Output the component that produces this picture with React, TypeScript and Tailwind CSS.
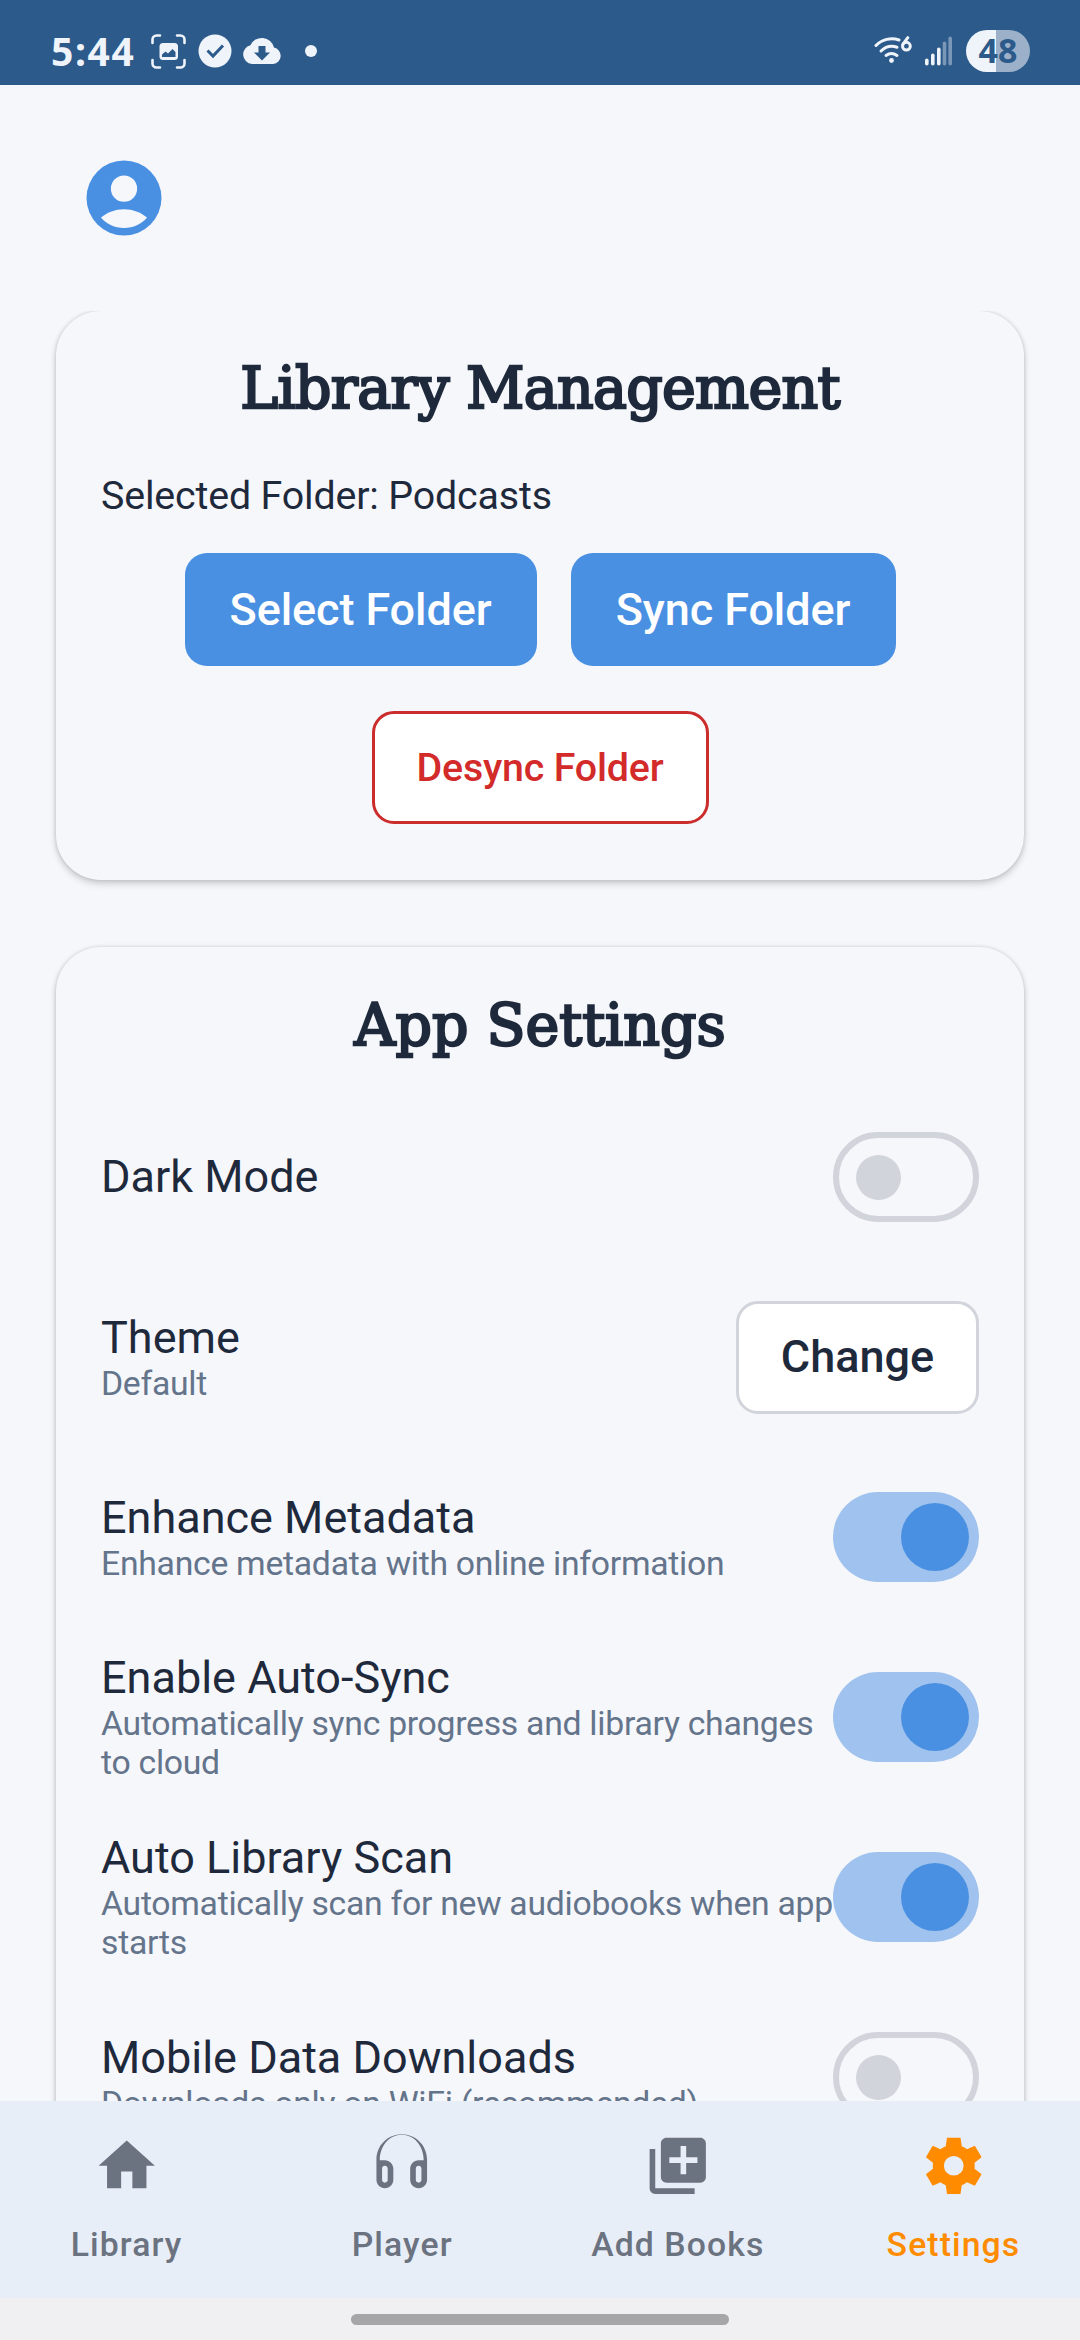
import type { ReactNode } from "react";
import { MdHome, MdLibraryAdd } from "react-icons/md";

const roboto = "font-['Roboto',sans-serif]";

function StatusBar() {
  return (
    <header className="flex h-[85px] shrink-0 items-center bg-[#2c5a8a] pl-[51px] pr-[50px] pt-[17px] text-[#eff3fa]">
      <span className="w-[100px] shrink-0 pb-[2px] font-['Noto_Sans',sans-serif] text-[39px] font-bold leading-none tracking-[1.6px]">
        5:44
      </span>
      <svg className="h-[35px] w-[35px] shrink-0" viewBox="0 0 35 35" fill="none">
        <path
          d="M1.5 9V5.5a4 4 0 0 1 4-4H9M26 1.5h3.5a4 4 0 0 1 4 4V9M33.500 26v3.500a4 4 0 0 1-4 4H26M9 33.500H5.500a4 4 0 0 1-4-4V26"
          stroke="currentColor"
          strokeWidth="2.600"
          strokeLinecap="round"
        />
        <rect x="8.500" y="9" width="18.500" height="17" rx="3.500" fill="currentColor" />
        <path d="M11 23v-2.500l3.500-3 2.500 2 4.500-4.500 3 3V23z" fill="#2c5a8a" />
      </svg>
      <svg className="ml-[12px] h-[34px] w-[34px] shrink-0" viewBox="0 0 34 34" fill="none">
        <circle cx="17" cy="17" r="16.500" fill="currentColor" />
        <path d="M9.500 16.500l5.500 5.500 10-10.500" stroke="#2c5a8a" strokeWidth="3" />
      </svg>
      <svg className="ml-[10px] h-[28px] w-[40px] shrink-0" viewBox="0 0 40 28">
        <path
          d="M10 27A9.500 9.500 0 0 1 8.400 8.300 12.500 12.500 0 0 1 32 10.600 8.300 8.300 0 0 1 31.200 27z"
          fill="currentColor"
        />
        <path d="M16.500 9h7v6.500h4.500l-8 8-8-8h4.500z" fill="#2c5a8a" />
      </svg>
      <span className="ml-[23px] h-3 w-3 rounded-full bg-current" />
      <svg className="ml-auto h-[30px] w-[38px] shrink-0" viewBox="0 0 38 30" fill="none">
        <g stroke="currentColor" strokeWidth="3" strokeLinecap="round">
          <path d="M2 9.500A22 22 0 0 1 25 4" />
          <path d="M7 15A16 16 0 0 1 23 11.200" />
          <path d="M12 19.500a9.500 9.500 0 0 1 11 0" />
          <circle cx="32.400" cy="10.200" r="3.900" />
          <path d="M29 8.200L33.800 1.600" />
        </g>
        <circle cx="17.500" cy="24.500" r="2.400" fill="currentColor" />
      </svg>
      <svg className="ml-[13px] h-[30px] w-[28px] shrink-0" viewBox="0 0 28 30" fill="currentColor">
        <rect x="0" y="22.500" width="3.600" height="7" rx="1.800" />
        <rect x="6" y="17.500" width="3.600" height="12" rx="1.800" />
        <rect x="12" y="11.500" width="3.600" height="18" rx="1.800" />
        <rect x="17.700" y="5.500" width="3.600" height="24" rx="1.800" opacity=".4" />
        <rect x="23.400" y=".5" width="3.600" height="29" rx="1.800" opacity=".4" />
      </svg>
      <span className="ml-[13px] flex h-[42px] w-[64px] items-center justify-center rounded-full bg-linear-to-r from-[#eff3fa] from-47% to-[#9cb1c9] to-47% pb-[2px] font-['Noto_Sans',sans-serif] text-[34px] font-bold leading-none text-[#2c5a8a]">
        48
      </span>
    </header>
  );
}

function CardTitle({ children, className }: { children: ReactNode; className: string }) {
  return (
    <h2
      className={`whitespace-nowrap text-center font-['DejaVu_Serif',serif] text-[57px] leading-[60px] text-[#1e293b] [-webkit-text-stroke:2.4px_#1e293b] ${className}`}
    >
      {children}
    </h2>
  );
}

function Card({ children, className }: { children: ReactNode; className: string }) {
  return (
    <section
      className={`mx-[56px] shrink-0 rounded-[45px] bg-[#f6f7fb] px-[45px] shadow-[0_4px_7px_rgba(0,0,0,0.16),0_0_4px_rgba(0,0,0,0.15)] ${className}`}
    >
      {children}
    </section>
  );
}

function Toggle({ on }: { on: boolean }) {
  return on ? (
    <button className="flex h-[90px] w-[146px] shrink-0 items-center justify-end rounded-full bg-[#a0c2ee] pr-[10px]">
      <span className="h-[68px] w-[68px] rounded-full bg-[#4a90e2]" />
    </button>
  ) : (
    <button className="flex h-[90px] w-[146px] shrink-0 items-center rounded-full border-[6px] border-[#d1d4db] pl-[17px]">
      <span className="h-[45px] w-[45px] rounded-full bg-[#d1d4db]" />
    </button>
  );
}

function SettingRow({ title, note, control }: { title: string; note?: string; control: ReactNode }) {
  return (
    <div className="flex h-[180px] items-center justify-between">
      <div className="min-w-0 flex-1 pb-px">
        <div className="text-[45px] leading-[53px] text-[#1e293b]">{title}</div>
        {note && (
          <div className="whitespace-pre text-[33.75px] leading-[39px] tracking-[-0.28px] text-[#64748b]">{note}</div>
        )}
      </div>
      {control}
    </div>
  );
}

function HeadphonesIcon() {
  return (
    <svg className="h-[67.5px] w-[67.5px]" viewBox="0 0 24 24" fill="currentColor" fillRule="evenodd">
      <path d="M12 .8C7 .8 3 4.800 3 9.800V17c0 1.660 1.340 3 3 3s3-1.340 3-3v-4c0-1.660-1.340-3-3-3H4.200C4.200 5 7.500.95 12 .95S19.800 5 19.800 10H18c-1.660 0-3 1.340-3 3v4c0 1.660 1.340 3 3 3s3-1.340 3-3V9.800C21 4.800 17 .8 12 .8zM6 12c.6 0 1 .4 1 1v4c0 .6-.4 1-1 1s-1-.4-1-1v-4c0-.6.4-1 1-1zm12 0c.6 0 1 .4 1 1v4c0 .6-.4 1-1 1s-1-.4-1-1v-4c0-.6.4-1 1-1z" />
    </svg>
  );
}

function GearIcon() {
  return (
    <svg className="h-[67.5px] w-[67.5px]" viewBox="-12 -12 24 24" fill="currentColor" fillRule="evenodd">
      <path d="M-2.400-10H2.400L2.850-6.900Q3.800-6.500 4.700-5.850L7.500-7.100 9.900-3 7.400-1.100Q7.500 0 7.400 1.100L9.900 3 7.500 7.100 4.700 5.850Q3.800 6.500 2.850 6.900L2.400 10H-2.400L-2.850 6.900Q-3.800 6.500-4.700 5.850L-7.500 7.100-9.900 3-7.400 1.100Q-7.500 0-7.400-1.100L-9.900-3-7.500-7.100-4.700-5.850Q-3.800-6.500-2.850-6.900zM0-3.500A3.500 3.500 0 1 0 0 3.500 3.500 3.500 0 1 0 0-3.500z" />
    </svg>
  );
}

function NavItem({ icon, label, active }: { icon: ReactNode; label: string; active?: boolean }) {
  return (
    <button
      className={`flex flex-1 flex-col items-center pt-[31px] ${active ? "text-[#ff8c00]" : "text-[#6b7280]"}`}
    >
      {icon}
      <span className="mt-[25px] whitespace-nowrap text-[33.75px] font-medium leading-[40px] tracking-[1.1px]">
        {label}
      </span>
    </button>
  );
}

export default function App() {
  return (
    <div className={`flex h-[2340px] w-[1080px] flex-col overflow-hidden bg-[#f6f7fb] ${roboto}`}>
      <StatusBar />
      <div className="flex h-[226px] shrink-0 items-center pl-[79px]">
        <svg className="h-[90px] w-[90px]" viewBox="0 0 24 24">
          <circle cx="12" cy="12" r="10" fill="#4a90e2" />
          <circle cx="12" cy="9.500" r="3.500" fill="#f6f7fb" />
          <path d="M5.850 17.200C7.600 15.800 9.700 15 12 15s4.400.8 6.150 2.200C16.600 19 14.500 20 12 20s-4.600-1-6.150-2.800z" fill="#f6f7fb" />
        </svg>
      </div>

      <main className="flex h-[1790px] shrink-0 flex-col gap-[67px] overflow-hidden">
        <Card className="h-[569px] pt-[47px]">
          <CardTitle className="tracking-[-0.7px]">Library Management</CardTitle>
          <p className="mt-[55px] text-[39.375px] leading-[46px] tracking-[-0.16px] text-[#1e293b]">
            Selected Folder: Podcasts
          </p>
          <div className="mt-[34px] flex flex-wrap justify-center gap-x-[34px] gap-y-[45px] font-medium">
            <button className="h-[113px] w-[352px] rounded-[22px] bg-[#4a90e2] text-[45px] tracking-[-0.1px] text-white">
              Select Folder
            </button>
            <button className="h-[113px] w-[325px] rounded-[22px] bg-[#4a90e2] text-[45px] tracking-[-0.1px] text-white">
              Sync Folder
            </button>
            <button className="h-[113px] w-[337px] rounded-[22px] border-[3px] border-[#cb2c2c] bg-white text-[39.375px] tracking-[-0.2px] text-[#d32a2a]">
              Desync Folder
            </button>
          </div>
        </Card>

        <Card className="h-[1400px] pt-[48px]">
          <CardTitle className="tracking-[0px]">App Settings</CardTitle>
          <div className="mt-[32px]">
            <SettingRow title="Dark Mode" control={<Toggle on={false} />} />
            <SettingRow
              title="Theme"
              note="Default"
              control={
                <button className="h-[113px] w-[243px] rounded-[22px] border-[3px] border-[#d1d4db] bg-white text-[45px] font-medium text-[#1e293b]">
                  Change
                </button>
              }
            />
            <SettingRow
              title="Enhance Metadata"
              note="Enhance metadata with online information"
              control={<Toggle on />}
            />
            <SettingRow
              title="Enable Auto-Sync"
              note={"Automatically sync progress and library changes\nto cloud"}
              control={<Toggle on />}
            />
            <SettingRow
              title="Auto Library Scan"
              note={"Automatically scan for new audiobooks when app\nstarts"}
              control={<Toggle on />}
            />
            <SettingRow
              title="Mobile Data Downloads"
              note="Downloads only on WiFi (recommended)"
              control={<Toggle on={false} />}
            />
          </div>
        </Card>
      </main>

      <nav className="flex h-[197px] shrink-0 gap-[22.500px] bg-[#e8eef8]">
        <NavItem icon={<MdHome className="h-[67.5px] w-[67.5px]" />} label="Library" />
        <NavItem icon={<HeadphonesIcon />} label="Player" />
        <NavItem icon={<MdLibraryAdd className="h-[67.5px] w-[67.5px]" />} label="Add Books" />
        <NavItem icon={<GearIcon />} label="Settings" active />
      </nav>
      <footer className="flex flex-1 justify-center bg-[#f0f0f2] pt-[16px]">
        <span className="h-[11px] w-[378px] rounded-full bg-[#a6a6a8]" />
      </footer>
    </div>
  );
}
